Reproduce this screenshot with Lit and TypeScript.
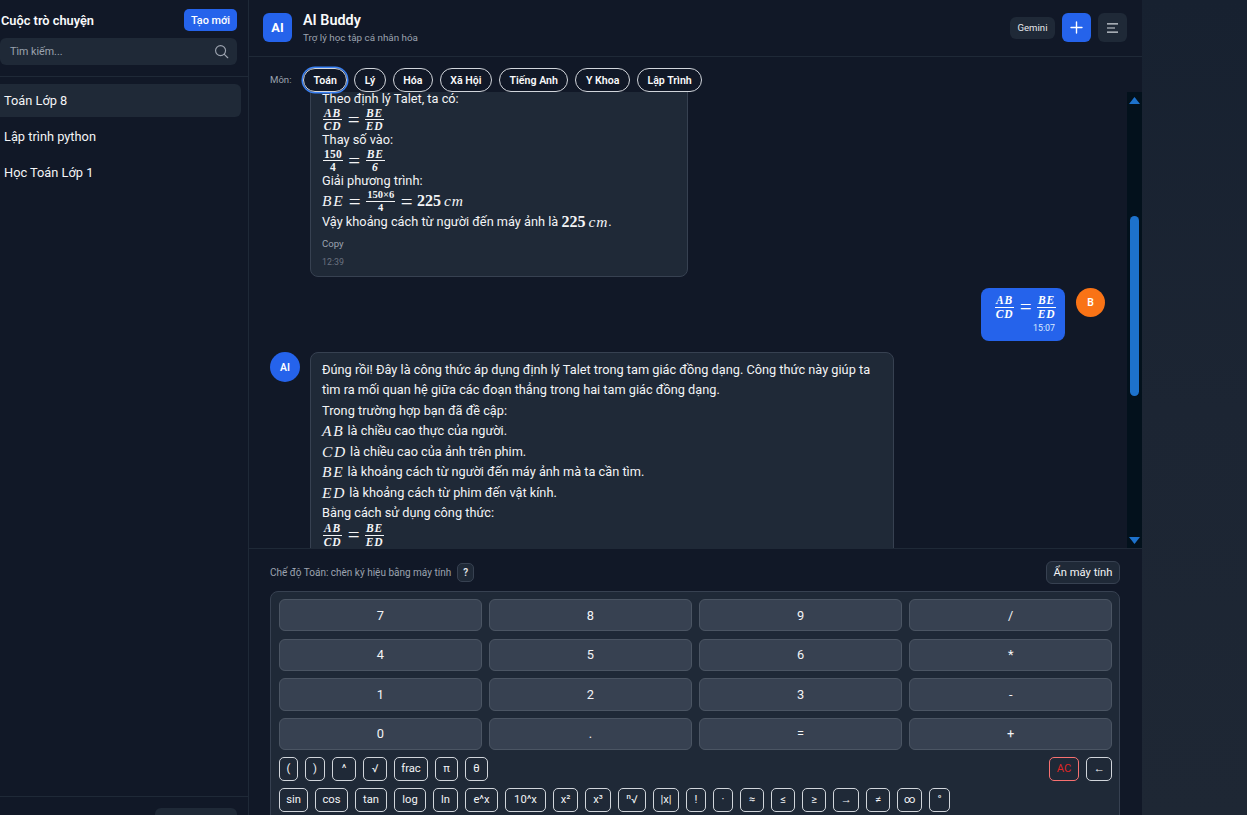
import { LitElement, html, css } from "lit";
import { customElement } from "lit/decorators.js";

const frac = (n: string, d: string, cls = "") =>
  html`<span class="frac ${cls}"><span class="num">${n}</span><span class="den">${d}</span></span>`;
const mi = (s: string) => html`<span class="mi">${s}</span>`;
const eq = html`<span class="eq">=</span>`;
const ratio = () => html`${frac("AB", "CD")}${eq}${frac("BE", "ED")}`;

const SUBJECTS = ["Toán", "Lý", "Hóa", "Xã Hội", "Tiếng Anh", "Y Khoa", "Lập Trình"];
const KEYS = ["7", "8", "9", "/", "4", "5", "6", "*", "1", "2", "3", "-", "0", ".", "=", "+"];
const ROW1: [string, number][] = [["(", 19], [")", 20], ["^", 24], ["√", 24], ["frac", 34], ["π", 23], ["θ", 23]];
const ROW2: [string, number][] = [
  ["sin", 29], ["cos", 33], ["tan", 32], ["log", 32], ["ln", 25], ["e^x", 33], ["10^x", 41], ["x²", 25], ["x³", 26],
  ["ⁿ√", 28], ["|x|", 26], ["!", 20], ["·", 20], ["≈", 24], ["≤", 24], ["≥", 24], ["→", 26], ["≠", 24], ["∞", 25], ["°", 21],
];

@customElement("app-root")
export class AppRoot extends LitElement {
  static styles = css`
    :host {
      display: flex;
      height: 815px;
      width: 1247px;
      overflow: hidden;
      background: #111827;
      color: #f3f4f6;
      font-family: Roboto, "Noto Sans", sans-serif;
      font-size: 12.8px;
    }
    * { box-sizing: border-box; }
    button { font-family: inherit; cursor: pointer; }

    .sidebar {
      width: 249px;
      flex: none;
      display: flex;
      flex-direction: column;
      border-right: 1px solid #1f2937;
      overflow: hidden;
    }
    .side-head { padding: 9px 11px 11px 0; border-bottom: 1px solid #1f2937; height: 77px; }
    .side-title { display: flex; justify-content: space-between; align-items: center; padding-left: 1px; height: 22px; }
    .side-title b { font-weight: 600; font-size: 12.8px; color: #f9fafb; }
    .new {
      height: 22px; width: 53px; padding: 0; border: 0; border-radius: 5px;
      background: #2563eb; color: #fff; font-size: 10.9px; font-weight: 500;
    }
    .search {
      margin-top: 7px; height: 27px; border-radius: 6px; background: #1f2937;
      display: flex; align-items: center; justify-content: space-between;
      padding: 0 8px 0 10px; color: #9ca3af; font-size: 10.7px;
    }
    .list { flex: 1; padding: 7px 7px 0 0; margin-left: -8px; display: flex; flex-direction: column; gap: 3px; }
    .item { height: 33px; display: flex; align-items: center; padding-left: 12px; border-radius: 6px; color: #f3f4f6; font-size: 12.8px; }
    .item.active { background: #1f2937; }
    .side-foot { height: 19px; flex: none; border-top: 1px solid #1f2937; padding: 11px 11px 0 0; display: flex; justify-content: flex-end; }
    .side-foot i { display: block; width: 82px; height: 30px; border-radius: 6px; background: #1f2937; }

    .main { width: 893px; flex: none; display: flex; flex-direction: column; min-height: 0; }
    .head {
      height: 57px; flex: none; border-bottom: 1px solid #1f2937;
      display: flex; align-items: center; padding: 0 15px 1px 14px;
    }
    .logo {
      width: 29px; height: 29px; border-radius: 6px; background: #2563eb; color: #fff;
      display: flex; align-items: center; justify-content: center; font-weight: 700; font-size: 12.8px;
    }
    .brand { margin-left: 11px; display: flex; flex-direction: column; flex: 1; padding-top: 2px; }
    .brand b { font-size: 14.4px; font-weight: 600; color: #f9fafb; line-height: 16px; }
    .brand span { font-size: 9.85px; color: #9ca3af; line-height: 12px; margin-top: 3px; }
    .chip {
      height: 22px; width: 45px; border-radius: 6px; background: #1f2937; color: #e5e7eb;
      font-size: 9.6px; display: flex; align-items: center; justify-content: center;
    }
    .sq { width: 29px; height: 29px; border-radius: 6px; display: flex; align-items: center; justify-content: center; margin-left: 7px; background: #1f2937; }
    .sq.blue { background: #2563eb; }

    .subjects {
      height: 35px; flex: none; display: flex; align-items: flex-end; gap: 7px; padding: 0 0 0 21px;
      position: relative; z-index: 1; background: #111827;
    }
    .subjects label { color: #9ca3af; font-size: 9.6px; width: 26px; line-height: 24px; }
    .pill {
      height: 24px; padding: 0 9.5px; border: 1px solid #d1d5db; border-radius: 999px;
      display: flex; align-items: center; font-size: 10.6px; font-weight: 600; color: #f9fafb;
    }
    .pill.on { box-shadow: 0 0 0 1.5px #3b82f6; }

    .msgs-wrap { height: 456px; flex: none; display: flex; overflow: hidden; }
    .msgs { flex: 1; overflow: hidden; padding: 0 22px 0 21px; display: flex; flex-direction: column; gap: 11px; min-width: 0; }
    .msg { display: flex; gap: 10px; flex: none; align-items: flex-start; }
    .msg.me { justify-content: flex-end; gap: 11px; }
    .ava {
      width: 30px; height: 30px; flex: none; border-radius: 50%; background: #2563eb; color: #fff;
      display: flex; align-items: center; justify-content: center; font-size: 10.4px; font-weight: 600;
    }
    .ava.orange { background: #f97316; width: 29px; height: 29px; }
    .ava.ghost { background: none; }
    .msg.first { margin-top: -11px; }
    .bubble {
      background: #1f2937; border: 1px solid #374151; border-radius: 8px;
      padding: 7px 11px 7px; color: #f3f4f6; line-height: 20.48px; font-size: 12.75px;
    }
    .b1 { width: 378px; height: 196px; }
    .b2 { width: 584px; }
    .line { display: flex; align-items: center; height: 20.48px; white-space: pre; }
    .line.math { margin-top: 1px; }
    .line.after { margin-top: 1.5px; }
    .meta-copy { font-size: 9.6px; color: #9ca3af; line-height: 12px; margin-top: 6px; }
    .meta-time { font-size: 8.8px; color: #6b7280; line-height: 12px; margin-top: 6px; }
    .user {
      width: 84px; height: 53px; border-radius: 8px; background: #2563eb; color: #fff;
      padding: 7px 10px 0 13px; display: flex; flex-direction: column;
    }
    .user .line { height: 20px; margin-top: 2px; }
    .user .t { font-size: 8.8px; color: #dbeafe; text-align: right; line-height: 12px; margin-top: 5px; }

    .frac { display: inline-flex; flex-direction: column; align-items: center; font-family: "Liberation Serif", serif; font-style: italic; font-weight: 700; font-size: 11.5px; line-height: 10.5px; letter-spacing: .9px; margin: 0 1px; }
    .frac .num { border-bottom: 1px solid currentColor; padding: 0 1px 1px; align-self: stretch; text-align: center; }
    .frac .den { padding-top: 1px; }
    .frac.up { font-style: normal; letter-spacing: .2px; }
    .frac.tight { letter-spacing: 0; font-size: 10.5px; }
    .eq { font-family: "Liberation Serif", serif; font-size: 21px; line-height: 16px; margin: 0 4.5px; color: inherit; font-weight: 400; }
    .mi { font-family: "Liberation Serif", serif; font-style: italic; font-size: 15.5px; letter-spacing: 1.7px; }
    .mi.unit { margin-left: 3px; letter-spacing: .9px; }
    .mn { font-family: "Liberation Serif", serif; font-size: 16px; font-weight: 700; }

    .track { width: 15px; flex: none; background: #03111c; display: flex; flex-direction: column; align-items: center; }
    .tri { display: block; flex: none; }
    .tri.top { margin-top: 5px; }
    .thumb { width: 9px; height: 180px; margin-top: 112px; border-radius: 5px; background: #1d72cc; flex: none; }
    .tri.bot { margin-top: auto; margin-bottom: 4px; }

    .composer { flex: 1; min-height: 0; border-top: 1px solid #1f2937; padding: 11px 22px 0 21px; overflow: hidden; }
    .mode { height: 24px; display: flex; align-items: center; font-size: 10px; color: #9ca3af; }
    .q {
      width: 17px; height: 19px; margin-left: 6px; border: 1px solid #374151; border-radius: 5px; background: #1f2937;
      display: flex; align-items: center; justify-content: center; color: #e5e7eb; font-size: 10px; font-weight: 600;
    }
    .hide {
      margin-left: auto; width: 74px; height: 23px; padding: 0; border: 1px solid #374151; border-radius: 6px;
      background: #1f2937; color: #f3f4f6; font-size: 11.2px; font-weight: 400;
    }
    .calc {
      margin-top: 7px; width: 850px; border: 1px solid #374151; border-radius: 8px; background: #1f2937;
      padding: 7px 7px 7px 8px; height: 300px;
    }
    .keys { display: grid; grid-template-columns: repeat(4, 1fr); gap: 7.2px 7.6px; }
    .key {
      height: 32.4px; border: 1px solid #4b5563; border-radius: 6px; background: #374151; color: #f3f4f6;
      font-size: 12.8px; display: flex; align-items: center; justify-content: center; padding: 0;
    }
    .row { display: flex; gap: 7px; margin-top: 6.5px; }
    .row + .row { margin-top: 7px; }
    .fn {
      height: 24px; padding: 0; border: 1px solid #d1d5db; border-radius: 5px; background: transparent;
      color: #f3f4f6; font-size: 11.2px; display: flex; align-items: center; justify-content: center; flex: none;
    }
    .fn.ac { margin-left: auto; width: 30px; border-color: #f87171; color: #dc2626; }
    .fn.back { width: 26px; }

    .aside { flex: 1; background: linear-gradient(180deg, #172130 0%, #1c2533 50%, #1e2734 100%); }
  `;

  private fn([label, w]: [string, number]) {
    return html`<button class="fn" style="width:${w}px">${label}</button>`;
  }

  render() {
    return html`
      <aside class="sidebar">
        <div class="side-head">
          <div class="side-title"><b>Cuộc trò chuyện</b><button class="new">Tạo mới</button></div>
          <div class="search">
            <span>Tìm kiếm...</span>
            <svg width="15" height="15" viewBox="0 0 24 24" fill="none" stroke="#9ca3af" stroke-width="1.8" stroke-linecap="round"><circle cx="10.5" cy="10.5" r="8"/><path d="M16.5 16.5 22 22"/></svg>
          </div>
        </div>
        <div class="list">
          <div class="item active">Toán Lớp 8</div>
          <div class="item">Lập trình python</div>
          <div class="item">Học Toán Lớp 1</div>
        </div>
        <div class="side-foot"><i></i></div>
      </aside>

      <section class="main">
        <header class="head">
          <div class="logo">AI</div>
          <div class="brand"><b>AI Buddy</b><span>Trợ lý học tập cá nhân hóa</span></div>
          <div class="chip">Gemini</div>
          <div class="sq blue">
            <svg width="13" height="13" viewBox="0 0 13 13" fill="none" stroke="#fff" stroke-width="1.4" stroke-linecap="round"><path d="M6.5 1v11M1 6.5h11"/></svg>
          </div>
          <div class="sq">
            <svg width="11" height="10" viewBox="0 0 11 10" fill="none" stroke="#d1d5db" stroke-width="1.2"><path d="M0 .8h11M0 5h8M0 9.2h11"/></svg>
          </div>
        </header>

        <div class="subjects">
          <label>Môn:</label>
          ${SUBJECTS.map((s, i) => html`<span class="pill ${i === 0 ? "on" : ""}">${s}</span>`)}
        </div>

        <div class="msgs-wrap">
          <div class="msgs">
            <div class="msg first">
              <div class="ava ghost"></div>
              <div class="bubble b1">
                <div class="line">Theo định lý Talet, ta có:</div>
                <div class="line">${ratio()}</div>
                <div class="line">Thay số vào:</div>
                <div class="line">${frac("150", "4", "up")}${eq}${frac("BE", "6")}</div>
                <div class="line">Giải phương trình:</div>
                <div class="line">${mi("BE")}${eq}${frac("150×6", "4", "up tight")}${eq}<span class="mn">225</span><span class="mi unit">cm</span></div>
                <div class="line">Vậy khoảng cách từ người đến máy ảnh là <span class="mn">225</span><span class="mi unit">cm</span>.</div>
                <div class="meta-copy">Copy</div>
                <div class="meta-time">12:39</div>
              </div>
            </div>

            <div class="msg me">
              <div class="user">
                <div class="line">${ratio()}</div>
                <div class="t">15:07</div>
              </div>
              <div class="ava orange">B</div>
            </div>

            <div class="msg">
              <div class="ava">AI</div>
              <div class="bubble b2">
                <div>Đúng rồi! Đây là công thức áp dụng định lý Talet trong tam giác đồng dạng. Công thức này giúp ta tìm ra mối quan hệ giữa các đoạn thẳng trong hai tam giác đồng dạng.</div>
                <div class="line">Trong trường hợp bạn đã đề cập:</div>
                <div class="line">${mi("AB")} là chiều cao thực của người.</div>
                <div class="line">${mi("CD")} là chiều cao của ảnh trên phim.</div>
                <div class="line">${mi("BE")} là khoảng cách từ người đến máy ảnh mà ta cần tìm.</div>
                <div class="line">${mi("ED")} là khoảng cách từ phim đến vật kính.</div>
                <div class="line">Bằng cách sử dụng công thức:</div>
                <div class="line math">${ratio()}</div>
                <div class="line after">Ta có thể tính được khoảng cách từ người đến máy ảnh.</div>
              </div>
            </div>
          </div>
          <div class="track">
            <svg class="tri top" width="11" height="7" viewBox="0 0 11 7"><path d="M5.5 0 11 7H0z" fill="#1d72cc"/></svg>
            <div class="thumb"></div>
            <svg class="tri bot" width="11" height="7" viewBox="0 0 11 7"><path d="M5.5 7 11 0H0z" fill="#1d72cc"/></svg>
          </div>
        </div>

        <div class="composer">
          <div class="mode">
            <span>Chế độ Toán: chèn ký hiệu bằng máy tính</span>
            <span class="q">?</span>
            <button class="hide">Ẩn máy tính</button>
          </div>
          <div class="calc">
            <div class="keys">${KEYS.map((k) => html`<button class="key">${k}</button>`)}</div>
            <div class="row">
              ${ROW1.map((k) => this.fn(k))}
              <button class="fn ac">AC</button>
              <button class="fn back">←</button>
            </div>
            <div class="row">${ROW2.map((k) => this.fn(k))}</div>
          </div>
        </div>
      </section>
      <div class="aside"></div>
    `;
  }
}
